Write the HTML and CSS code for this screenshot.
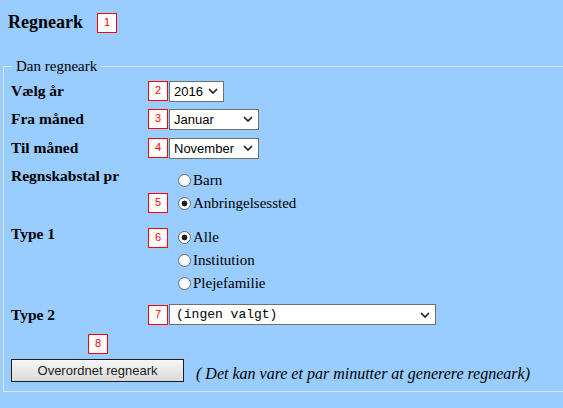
FILE: index.html
```html
<!DOCTYPE html>
<html lang="da">
<head>
<meta charset="utf-8">
<title>Regneark</title>
<link rel="stylesheet" href="styles.css">
</head>
<body>
<div class="header">
  <h1 class="title">Regneark</h1>
  <span class="badge badge-title">1</span>
</div>
<fieldset class="panel">
  <legend>Dan regneark</legend>
  <div class="row row-year">
    <label class="lbl">Vælg år</label>
    <span class="badge">2</span>
    <select class="sel sel-year"><option>2016</option></select>
  </div>
  <div class="row row-from">
    <label class="lbl">Fra måned</label>
    <span class="badge">3</span>
    <select class="sel sel-month"><option>Januar</option></select>
  </div>
  <div class="row row-to">
    <label class="lbl">Til måned</label>
    <span class="badge">4</span>
    <select class="sel sel-month"><option>November</option></select>
  </div>
  <div class="row row-radio row-regn">
    <span class="lbl">Regnskabstal pr</span>
    <span class="badge">5</span>
    <div class="opts">
      <label class="opt"><input class="radio" type="radio" name="regn"> Barn</label>
      <label class="opt"><input class="radio" type="radio" name="regn" checked> Anbringelsessted</label>
    </div>
  </div>
  <div class="row row-radio row-type1">
    <span class="lbl">Type 1</span>
    <span class="badge">6</span>
    <div class="opts">
      <label class="opt"><input class="radio" type="radio" name="type1" checked> Alle</label>
      <label class="opt"><input class="radio" type="radio" name="type1"> Institution</label>
      <label class="opt"><input class="radio" type="radio" name="type1"> Plejefamilie</label>
    </div>
  </div>
  <div class="row row-type2">
    <label class="lbl">Type 2</label>
    <span class="badge">7</span>
    <select class="sel sel-type"><option>(ingen valgt)</option></select>
  </div>
  <div class="marker-row"><span class="badge">8</span></div>
  <div class="actions">
    <button class="btn" type="button">Overordnet regneark</button>
    <span class="note">( Det kan vare et par minutter at generere regneark)</span>
  </div>
</fieldset>
</body>
</html>
```
FILE: styles.css
```css
html {
  overflow: hidden;
}
body {
  margin: 0;
  background: #99ccff;
  font-family: "Liberation Serif", "Times New Roman", serif;
  font-size: 15px;
  color: #000;
}
.header {
  display: flex;
  align-items: flex-start;
  padding: 11px 0 0 8px;
}
.title {
  margin: 0;
  font-size: 18px;
  font-weight: bold;
  line-height: 22px;
}
.badge {
  display: block;
  box-sizing: border-box;
  width: 20px;
  height: 20px;
  border: 1px solid #ff0000;
  background: #fff;
  color: #ff0000;
  font: 11px/13px "Liberation Sans", Arial, sans-serif;
  text-align: center;
  padding-top: 2px;
}
.badge-title {
  margin: 2px 0 0 14px;
}
.panel {
  margin: 25px -40px 0 3px;
  padding: 5.6px 0 8px 7px;
  border: 1px solid #dfe4ea;
  min-width: 0;
}
.panel legend {
  margin-left: 1px;
  padding: 0 4px;
}
.row {
  display: grid;
  grid-template-columns: 137px 21px auto;
  align-items: center;
  justify-items: start;
}
.lbl {
  font-size: 15.5px;
  font-weight: bold;
  line-height: 18px;
}
.sel {
  appearance: none;
  -webkit-appearance: none;
  box-sizing: border-box;
  height: 21px;
  margin: 0;
  border: 1px solid #707070;
  border-radius: 0;
  background: #fff url("data:image/svg+xml,%3Csvg xmlns='http://www.w3.org/2000/svg' width='10' height='6' viewBox='0 0 10 6'%3E%3Cpath d='M1 1l4 4 4-4' fill='none' stroke='%23222' stroke-width='1.7'/%3E%3C/svg%3E") no-repeat right 5px center;
  font: 13px "Liberation Sans", Arial, sans-serif;
  color: #000;
  padding: 0 18px 0 4px;
}
.sel-year {
  width: 55px;
}
.sel-month {
  width: 90px;
}
.sel-type {
  width: 267px;
  font-family: "Liberation Mono", "Courier New", monospace;
  padding-left: 6px;
}
.row-from {
  margin-top: 7px;
}
.row-to {
  margin-top: 8px;
}
.row-radio {
  align-items: start;
}
.row-regn {
  margin-top: 8px;
}
.row-regn .badge {
  align-self: end;
  margin-bottom: 1.5px;
}
.row-regn .opts {
  margin-top: 2px;
}
.row-type1 {
  margin-top: 10px;
}
.row-type1 .badge {
  margin-top: 3.5px;
}
.row-type1 .opts {
  margin-top: 1px;
}
.opt {
  display: flex;
  align-items: center;
  height: 23px;
  white-space: nowrap;
}
.radio {
  appearance: none;
  -webkit-appearance: none;
  box-sizing: border-box;
  width: 13px;
  height: 13px;
  margin: 0 2px 0 9px;
  border: 1px solid #6a6a6a;
  border-radius: 50%;
  background: #fff;
}
.radio:checked {
  background: radial-gradient(circle, #1e1e1e 0 2.6px, #fff 3.2px);
}
.row-type2 {
  margin-top: 9.5px;
}
.marker-row {
  margin: 9px 0 0 77px;
}
.actions {
  display: flex;
  align-items: flex-start;
  margin-top: 5px;
}
.btn {
  box-sizing: border-box;
  width: 173px;
  height: 23px;
  margin: 0;
  padding: 0;
  border: 1px solid #1b1b1b;
  border-radius: 0;
  background: linear-gradient(#f6f6f6, #dadada);
  font: 13px "Liberation Sans", Arial, sans-serif;
  color: #222;
}
.note {
  font-size: 16px;
  font-style: italic;
  margin: 6px 0 0 12px;
  line-height: 18px;
  white-space: nowrap;
}
```
